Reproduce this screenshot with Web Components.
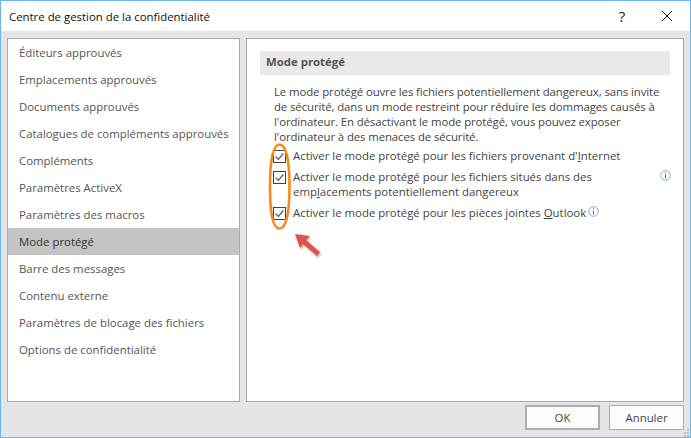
<!DOCTYPE html>
<html lang="fr">
<head>
<meta charset="utf-8">
<title>Centre de gestion de la confidentialité</title>
<style>
html, body { margin: 0; padding: 0; background: #fff; }
body { font: 11.4px "Open Sans", "Noto Sans", "Liberation Sans", sans-serif; color: #444; }
</style>
</head>
<body>
<trust-dialog>
  <span slot="title">Centre de gestion de la confidentialité</span>
  <nav-list slot="nav">
    <nav-item>Éditeurs approuvés</nav-item>
    <nav-item>Emplacements approuvés</nav-item>
    <nav-item>Documents approuvés</nav-item>
    <nav-item>Catalogues de compléments approuvés</nav-item>
    <nav-item>Compléments</nav-item>
    <nav-item>Paramètres ActiveX</nav-item>
    <nav-item>Paramètres des macros</nav-item>
    <nav-item selected>Mode protégé</nav-item>
    <nav-item>Barre des messages</nav-item>
    <nav-item>Contenu externe</nav-item>
    <nav-item>Paramètres de blocage des fichiers</nav-item>
    <nav-item>Options de confidentialité</nav-item>
  </nav-list>
  <protected-pane slot="main"></protected-pane>
  <dlg-button slot="buttons" default>OK</dlg-button>
  <dlg-button slot="buttons">Annuler</dlg-button>
</trust-dialog>

<script>
class TrustDialog extends HTMLElement {
  constructor() {
    super();
    this.attachShadow({mode: 'open'}).innerHTML = `
      <style>
        :host { display: flex; flex-direction: column; box-sizing: border-box; width: 691px; height: 438px;
          border: 1px solid #6bb6ec; background: #e5e5e5; position: relative; overflow: hidden; }
        .title { height: 30px; flex: none; background: #fff; display: flex; align-items: center; padding: 0 0 0 8px; color: #111; font-size: 11.4px; }
        .title .sp { flex: 1; }
        .title svg { display: block; }
        .help { width: 12px; margin-right: 33px; font-size: 15px; color: #222; text-align: center; }
        .close { margin-right: 17px; }
        .body { flex: none; display: flex; gap: 6px; margin: 7px 6px 0 6px; height: 364px; }
        .nav { flex: none; width: 233px; box-sizing: border-box; border: 1px solid #ababab; background: #fff; }
        .main { flex: none; width: 438px; box-sizing: border-box; border: 1px solid #ababab; background: #fff; }
        .buttons { flex: none; display: flex; justify-content: flex-end; gap: 9px; margin: 3px 6px 0 0; }
        .grip { position: absolute; right: 0; bottom: 0; }
      </style>
      <div class="title"><slot name="title"></slot><span class="sp"></span>
        <span class="help">?</span>
        <svg class="close" width="12" height="12" viewBox="0 0 12 12"><path d="M1 1l10 10M11 1L1 11" stroke="#222" stroke-width="1" fill="none"/></svg>
      </div>
      <div class="body">
        <div class="nav"><slot name="nav"></slot></div>
        <div class="main"><slot name="main"></slot></div>
      </div>
      <div class="buttons"><slot name="buttons"></slot></div>
      <svg class="grip" width="8" height="8" viewBox="0 0 8 8" fill="#bdbdbd">
        <rect x="5" y="0" width="2" height="2"/><rect x="2" y="3" width="2" height="2"/><rect x="5" y="3" width="2" height="2"/>
        <rect x="2" y="6" width="2" height="2"/><rect x="5" y="6" width="2" height="2"/>
      </svg>`;
  }
}

class NavList extends HTMLElement {
  constructor() {
    super();
    this.attachShadow({mode: 'open'}).innerHTML = `
      <style>:host { display: flex; flex-direction: column; }</style><slot></slot>`;
  }
}

class NavItem extends HTMLElement {
  constructor() {
    super();
    this.attachShadow({mode: 'open'}).innerHTML = `
      <style>
        :host { display: block; height: 27px; line-height: 27px; padding-left: 11px; color: #555; white-space: nowrap; font-size: 11.4px; }
        :host([selected]) { background: #c4c4c4; color: #333; }
      </style><slot></slot>`;
  }
}

class InfoIcon extends HTMLElement {
  constructor() {
    super();
    this.attachShadow({mode: 'open'}).innerHTML = `
      <style>:host { display: inline-block; width: 11px; height: 11px; } svg { display: block; }</style>
      <svg width="11" height="11" viewBox="0 0 11 11">
        <circle cx="5.5" cy="5.5" r="4.8" fill="#fff" stroke="#7fa6dc"/>
        <rect x="5" y="2.4" width="1" height="1" fill="#3f6fb5"/>
        <rect x="5" y="4.4" width="1" height="4" fill="#3f6fb5"/>
      </svg>`;
  }
}

class CheckRow extends HTMLElement {
  constructor() {
    super();
    this.attachShadow({mode: 'open'}).innerHTML = `
      <style>
        :host { display: flex; align-items: flex-start; gap: 7px; line-height: 15px; }
        svg { flex: none; display: block; margin: 2px 0 0 -1px; }
        .txt { flex: 1; }
      </style>
      <svg width="13" height="13" viewBox="0 0 13 13">
        <rect x=".5" y=".5" width="12" height="12" fill="#fff" stroke="#444"/>
        <path d="M2.6 6.6l2.8 2.8 5-6" stroke="#555" stroke-width="1.3" fill="none"/>
      </svg>
      <div class="txt"><slot></slot></div><slot name="end"></slot>`;
  }
}

class ProtectedPane extends HTMLElement {
  constructor() {
    super();
    this.attachShadow({mode: 'open'}).innerHTML = `
      <style>
        :host { display: block; position: relative; height: 100%; font-size: 11.4px; color: #444; }
        h2 { margin: 0; height: 24px; line-height: 22px; background: #e9e9e9; padding-left: 6px; font-size: 11.4px; font-weight: 700; color: #555; }
        .head { padding: 12px 13px 0 13px; }
        .content { padding: 9px 8px 0 27px; }
        p { margin: 0; line-height: 15px; white-space: nowrap; letter-spacing: -.1px; }
        .rows { display: flex; flex-direction: column; gap: 6px; margin-top: 4px; }
        u { text-underline-offset: 1px; }
        .inline { margin-left: 2px; vertical-align: 0; }
        .far { margin: 1px 4px 0 0; }
      </style>
      <div class="head"><h2>Mode protégé</h2></div>
      <div class="content">
        <p>Le mode protégé ouvre les fichiers potentiellement dangereux, sans invite<br>de sécurité, dans un mode restreint pour réduire les dommages causés à<br>l'ordinateur. En désactivant le mode protégé, vous pouvez exposer<br>l'ordinateur à des menaces de sécurité.</p>
        <div class="rows">
          <check-row>Activer le mode protégé pour les fichiers provenant d'<u>I</u>nternet</check-row>
          <check-row>Activer le mode protégé pour les fichiers situés dans des<br>emp<u>l</u>acements potentiellement dangereux<info-icon class="far" slot="end"></info-icon></check-row>
          <check-row>Activer le mode protégé pour les pièces jointes <u>O</u>utlook<info-icon class="inline"></info-icon></check-row>
        </div>
      </div>
      <risk-mark></risk-mark>`;
  }
}

class RiskMark extends HTMLElement {
  constructor() {
    super();
    this.attachShadow({mode: 'open'}).innerHTML = `
      <style>
        :host { position: absolute; left: 20px; top: 100px; width: 70px; height: 125px; pointer-events: none; }
        svg { display: block; overflow: visible; }
      </style>
      <svg width="70" height="125" viewBox="0 0 70 125">
        <defs><filter id="sh" x="-30%" y="-30%" width="170%" height="170%"><feDropShadow dx="1" dy="1.5" stdDeviation="1.2" flood-color="#000" flood-opacity=".35"/></filter></defs>
        <path d="M12.5 5.5C20 5.5 22.5 25 22.5 47.5S20 89.5 12.5 89.5C5 89.5 3 70 3 47.5S5 5.5 12.5 5.5z" fill="none" stroke="#f58a1e" stroke-width="2.6"/>
        <path d="M28 95l15 2-4 4 14 12-3 4-14-12-3 4z" fill="#e0534c" filter="url(#sh)"/>
      </svg>`;
  }
}

class DlgButton extends HTMLElement {
  constructor() {
    super();
    this.attachShadow({mode: 'open'}).innerHTML = `
      <style>
        :host { display: flex; align-items: center; justify-content: center; box-sizing: border-box; width: 75px; height: 25px;
          background: #fdfdfd; border: 1px solid #adadad; color: #444; font-size: 11.4px; }
        :host([default]) { border-width: 2px; }
      </style><slot></slot>`;
  }
}

customElements.define('trust-dialog', TrustDialog);
customElements.define('nav-list', NavList);
customElements.define('nav-item', NavItem);
customElements.define('info-icon', InfoIcon);
customElements.define('check-row', CheckRow);
customElements.define('risk-mark', RiskMark);
customElements.define('protected-pane', ProtectedPane);
customElements.define('dlg-button', DlgButton);
</script>
</body>
</html>
